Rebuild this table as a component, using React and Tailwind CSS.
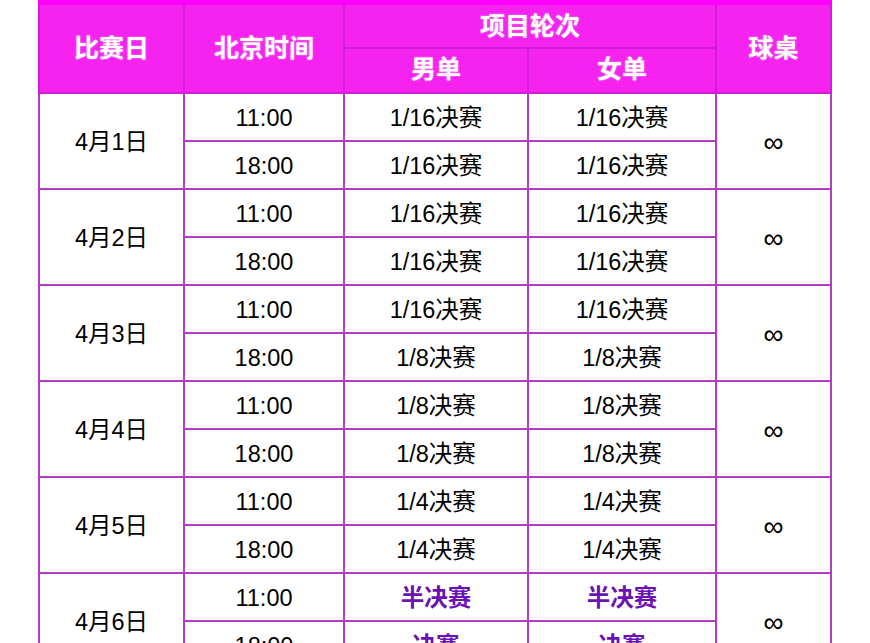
import React from 'react'

const days = [
  { day: '4月1日', rows: [['11:00', '1/16决赛', '1/16决赛'], ['18:00', '1/16决赛', '1/16决赛']] },
  { day: '4月2日', rows: [['11:00', '1/16决赛', '1/16决赛'], ['18:00', '1/16决赛', '1/16决赛']] },
  { day: '4月3日', rows: [['11:00', '1/16决赛', '1/16决赛'], ['18:00', '1/8决赛', '1/8决赛']] },
  { day: '4月4日', rows: [['11:00', '1/8决赛', '1/8决赛'], ['18:00', '1/8决赛', '1/8决赛']] },
  { day: '4月5日', rows: [['11:00', '1/4决赛', '1/4决赛'], ['18:00', '1/4决赛', '1/4决赛']] },
  { day: '4月6日', rows: [['11:00', '半决赛', '半决赛', true], ['18:00', '决赛', '决赛', true]] },
]

const th = "border-2 border-[#cf1fd6] text-white font-bold text-[25px] text-center align-middle [text-shadow:0_0_2px_rgba(255,255,255,0.6)]"
const td = "border-2 border-[#b23cc4] text-[23.5px] text-center align-middle h-[48px] px-0 pt-[5px] pb-0"

export default function App() {
  return (
    <div className="w-[870px] h-[643px] overflow-hidden bg-white font-['Liberation_Sans','Noto_Sans_CJK_SC',sans-serif]">
      <table className="ml-[38px] w-[792px] table-fixed border-collapse border-t-[5px] border-t-[#ff00ff]">
        <colgroup>
          <col className="w-[145px]" />
          <col className="w-[160px]" />
          <col className="w-[184px]" />
          <col className="w-[188px]" />
          <col className="w-[115px]" />
        </colgroup>
        <thead className="bg-[#f522f0]">
          <tr className="h-[45px]">
            <th rowSpan={2} className={th}>比赛日</th>
            <th rowSpan={2} className={th}>北京时间</th>
            <th colSpan={2} className={`${th} pt-[2px]`}>项目轮次</th>
            <th rowSpan={2} className={th}>球桌</th>
          </tr>
          <tr className="h-[45px]">
            <th className={th}>男单</th>
            <th className={th}>女单</th>
          </tr>
        </thead>
        <tbody>
          {days.map(d => d.rows.map((r, i) => (
            <tr key={d.day + i}>
              {i === 0 && <td rowSpan={2} className={`${td} text-black`}>{d.day}</td>}
              <td className={`${td} text-black`}>{r[0]}</td>
              <td className={`${td} ${r[3] ? 'text-[#6a12b4] font-bold' : 'text-black'}`}>{r[1]}</td>
              <td className={`${td} ${r[3] ? 'text-[#6a12b4] font-bold' : 'text-black'}`}>{r[2]}</td>
              {i === 0 && <td rowSpan={2} className={`${td} text-black text-[28px]`}>∞</td>}
            </tr>
          )))}
        </tbody>
      </table>
    </div>
  )
}
